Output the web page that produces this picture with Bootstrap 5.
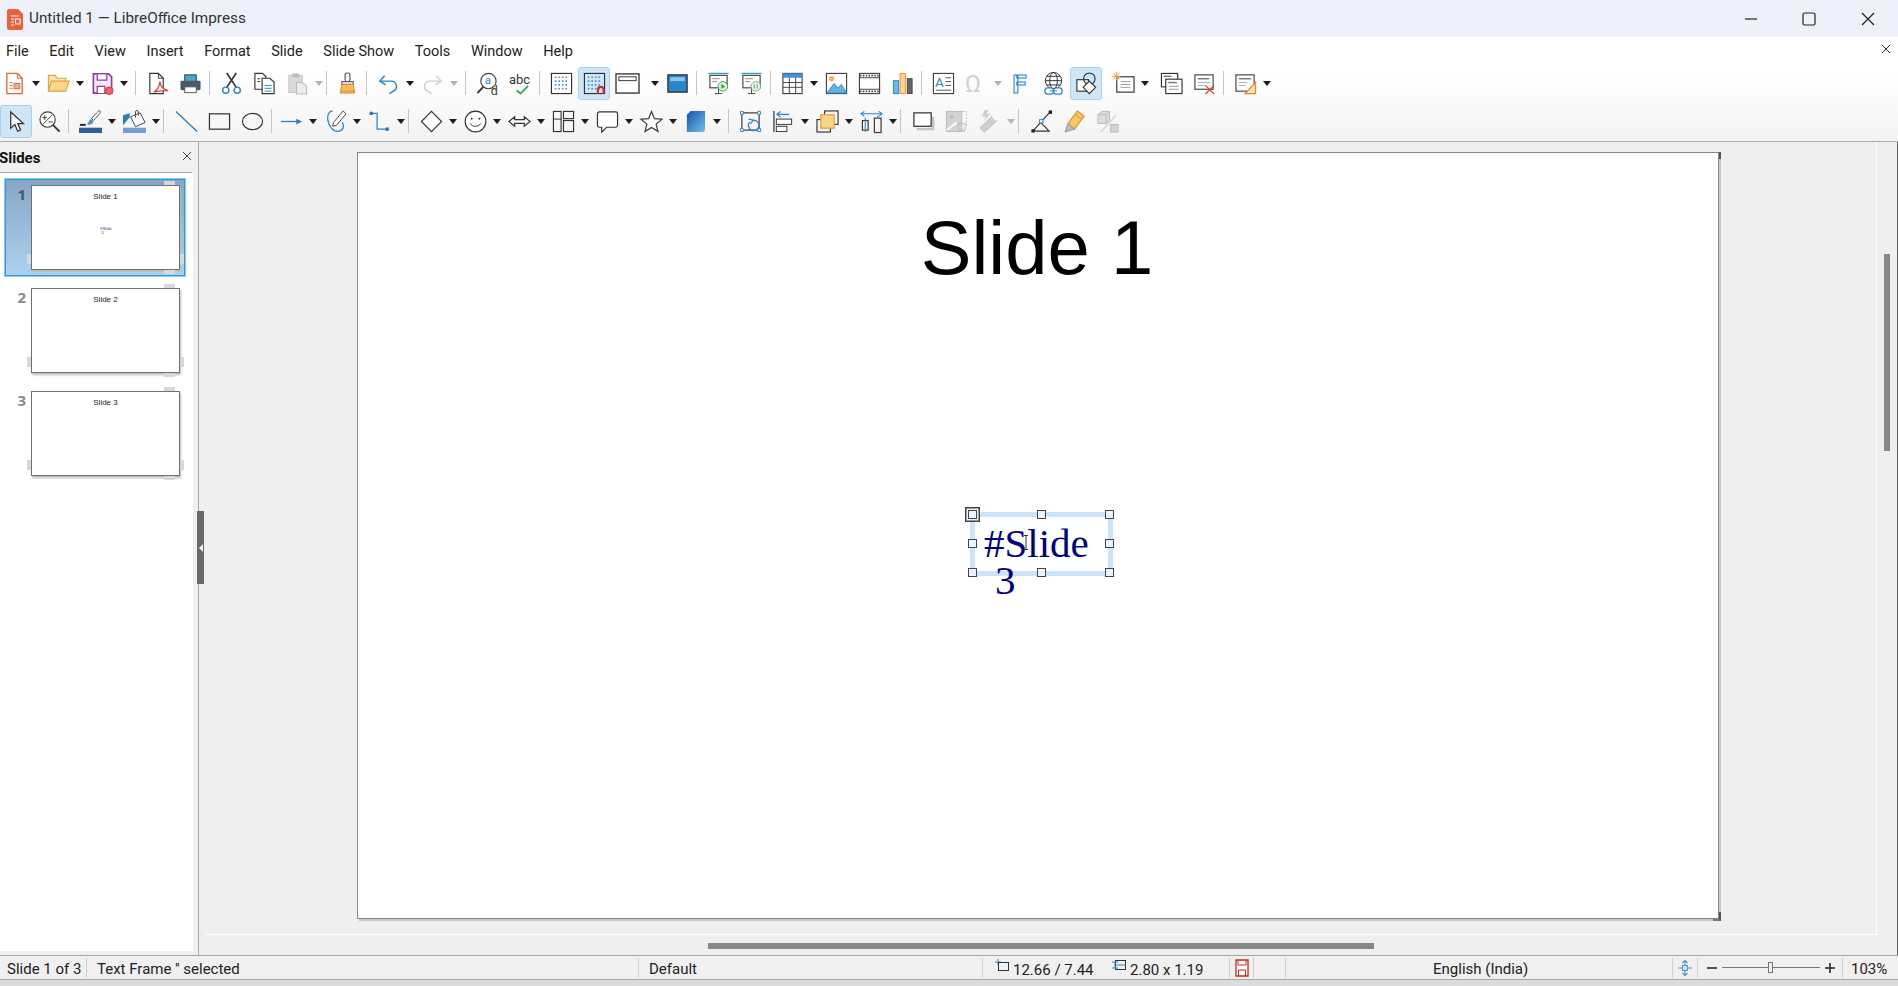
<!DOCTYPE html>
<html lang="en">
<head>
<meta charset="UTF-8">
<title>Untitled 1 — LibreOffice Impress</title>
<link href="https://cdn.jsdelivr.net/npm/bootstrap@5.3.0/dist/css/bootstrap.min.css" rel="stylesheet">
<style>
html, body { height: 986px; overflow: hidden; }
body { width: 1898px; background: #fff; font-family: Roboto, "Liberation Sans", sans-serif; color: #222; }

/* title bar */
.win-title { height: 37px; background: #eef1f9; padding-left: 6px; font-size: 15.3px; color: #333; }
.win-title .app-logo { width: 18px; height: 22px; margin-right: 5px; }
.win-btns { margin-left: auto; }
.win-btns svg { width: 14px; height: 14px; }
.win-btn-min { margin-right: 44px; }
.win-btn-max { margin-right: 45px; }
.win-btn-close { margin-right: 23px; }

/* menu + toolbars */
.chrome { height: 105px; background: linear-gradient(#fff 0, #fff 35%, #f3f3f3 100%); border-bottom: 1px solid #ababab; flex: none; }
.menu-row { height: 28px; padding: 2px 0 0 6px; gap: 20.6px; font-size: 14.5px; position: relative; }
.menu-row .nav-link { padding: 0; color: #222; }
.doc-close { position: absolute; right: 8px; top: 8px; width: 8px; height: 8px; }
.tbar { display: flex; align-items: center; }
.tbar-std { height: 36px; }
.tbar-draw { height: 40px; padding-left: 2px; }
.tb-tool { width: 28px; height: 30px; margin-right: 5px; padding: 0; border: 0; border-radius: 3px; display: flex; align-items: center; justify-content: center; background: transparent; }
.tb-tool svg { width: 23px; height: 23px; flex: none; overflow: visible; }
.tb-tool.with-drop { margin-right: 0; }
.tb-tool.wide-drop { padding-right: 6px; width: 34px; }
.tb-tool.is-on { width: 32px; height: 33px; margin: 0 3px 0 -2px; background: #cfe6f8; border: 1px solid #aad0ea; }
.tb-drop { width: 16px; display: flex; justify-content: center; flex: none; }
.tb-drop::after { content: ""; border-style: solid; border-width: 5px 4.5px 0; border-color: #1c1c1c transparent transparent; }
.tb-drop.off::after { border-top-color: #b5b5b5; }
.tb-sep { width: 1px; height: 24px; background: #c6c6c6; margin-right: 7px; flex: none; }
.tb-drop + .tb-sep { margin-left: 3px; margin-right: 7px; }
.tb-drop + .tb-sep.tight { margin-left: -1px; margin-right: 6px; }
.tbar-draw .tb-drop + .tb-sep.tight { margin-right: 8px; }
.tb-sep.narrow { margin-right: 5px; }
.tb-label { font-family: Roboto, sans-serif; }

/* main */
.work-area { height: 813px; flex: none; background: #efefef; }
.side-panel { width: 199px; flex: none; background: #f0f0f0; border-right: 1px solid #a8a8a8; position: relative; padding-bottom: 4px; }
.side-head { width: 192px; height: 31px; flex: none; border-bottom: 1px solid #a9a9a9; font-size: 15px; font-weight: 700; color: #111; line-height: 32px; }
.side-head .side-x { width: 10px; height: 10px; margin: 9px 0 0 auto; }
.side-head span { margin-left: -1px; }
.slide-list { width: 193px; background: #fff; padding: 6px 0 0 5px; flex-grow: 1; }
.slide-item { width: 180px; height: 97px; margin-bottom: 6px; padding-top: 6px; display: flex; }
.slide-item.is-current { background: linear-gradient(#86a6c4, #acd2f0); border: 1px solid #2d9ae0; box-shadow: 0 0 0 1px #8cc8f0; padding-top: 5px; margin-left: 0; }
.slide-item.is-current .slide-no { width: 20px; }
.slide-no { width: 21px; text-align: right; font-size: 15px; font-weight: 700; color: #8a8a8a; line-height: 19px; font-family: "Open Sans", sans-serif; }
.is-current .slide-no { color: #44586c; }
.slide-thumb { width: 149px; height: 85px; margin-left: 5px; background: #fff; border: 1px solid #707070; box-shadow: 1px 2px 2px #bbb; position: relative; font: 8px/1 "Liberation Sans", sans-serif; color: #222; text-align: center; padding-top: 7px; }
.slide-thumb::before { content: ""; position: absolute; left: 132px; top: -5px; width: 11px; height: 4px; background: #d8d8d8; box-shadow: 0 89px 0 #d8d8d8; }
.slide-thumb::after { content: ""; position: absolute; left: -5px; top: 68px; width: 4px; height: 10px; background: #d8d8d8; box-shadow: 153px 0 0 #d8d8d8; }
.thumb-mini { position: absolute; left: 68px; top: 41px; font: 4.8px/3.6px "Liberation Serif", serif; color: #1a1a9a; text-align: left; }
.side-grip { position: absolute; left: 197px; top: 369px; width: 7px; height: 73px; background: #696969; display: flex; align-items: center; justify-content: center; }
.side-grip::after { content: ""; border-style: solid; border-width: 4px 4px 4px 0; border-color: transparent #eee transparent transparent; }

.editor { flex-grow: 1; min-width: 0; }
.canvas-wrap { width: 1671px; height: 793px; padding: 10px 0 0 151px; border-right: 1px solid #fff; border-bottom: 1px solid #fff; flex: none; margin-left: 7px; }
.slide-page { width: 1362px; height: 767px; background: #fff; border: 1px solid #888; box-shadow: 2px 2px 0 #c9c9c9; position: relative; }
.slide-page::before { content: ""; position: absolute; right: -3px; top: -1px; width: 2px; height: 7px; background: #555; }
.slide-page::after { content: ""; position: absolute; right: -3px; bottom: -3px; width: 8px; height: 9px; border-right: 2px solid #555; border-bottom: 2px solid #777; }
.slide-heading { position: absolute; left: -2px; right: 0; top: 57px; text-align: center; font: 76px/1 "Liberation Sans", sans-serif; color: #000; }
.text-frame { position: absolute; left: 612px; top: 359px; width: 143px; height: 64px; border: 5px solid #cbe3fb; }
.frame-text { position: absolute; left: 9px; top: 8px; font: 41px/37px "Liberation Serif", serif; color: #000080; white-space: nowrap; }
.frame-text div + div { padding-left: 11px; }
.sel-dot { position: absolute; width: 9px; height: 9px; background: #eef4fb; border: 1.5px solid #444; }
.dot-l { left: -7px; } .dot-c { left: 62px; } .dot-r { left: 130px; }
.dot-t { top: -7px; } .dot-m { top: 22px; } .dot-b { top: 51px; }
.dot-first { box-shadow: 0 0 0 1.5px #eef4fb, 0 0 0 3px #444; }
.i-beam { position: absolute; left: 48px; top: 18px; width: 6px; height: 15px; }
.v-track { flex-grow: 1; padding: 112px 0 0 7px; border-right: 1px solid #5f5f5f; }
.v-thumb { width: 6px; height: 197px; background: #888; }
.h-track { height: 20px; padding: 8px 0 0 509px; flex: none; border-right: 1px solid #5f5f5f; }
.h-thumb { width: 666px; height: 6px; background: #888; }

/* status bar */
.status-bar { height: 25px; flex: none; background: #f0f0f0; border-top: 1px solid #a6a6a6; border-bottom: 1px solid #a6a6a6; font-size: 15px; color: #222; white-space: nowrap; }
.status-cell { height: 20px; border-left: 1px solid #cfcfcf; display: flex; align-items: center; flex: none; padding-top: 4px; }
.status-cell:first-child { border-left: 0; }
.cell-page { width: 86px; padding-left: 7px; }
.cell-sel { width: 552px; padding-left: 10px; }
.cell-style { width: 344px; padding-left: 10px; }
.cell-pos { width: 247px; padding-left: 12px; padding-top: 0; }
.cell-save { width: 24px; justify-content: center; padding-top: 0; }
.cell-mod { width: 32px; }
.cell-lang { width: 387px; padding-left: 147px; }
.cell-fit { width: 25px; justify-content: center; padding-top: 0; }
.cell-zoom { width: 145px; padding-left: 9px; padding-top: 0; }
.cell-pct { width: 56px; padding-left: 8px; }
.status-ico { width: 14px; height: 14px; flex: none; margin-right: 4px; margin-top: -4px; }
.pos-val { padding-top: 5px; width: 105px; }
.zoom-track { width: 98px; height: 1px; background: #777; margin: 0 5px; position: relative; }
.zoom-knob { position: absolute; left: 46px; top: -5px; width: 5px; height: 11px; background: #eee; border: 1px solid #777; }
.win-foot { height: 6px; flex: none; background: #dcdcdc; }
</style>
</head>
<body class="d-flex flex-column">

<svg width="0" height="0" class="position-absolute">
  <defs>
    <linearGradient id="cube-fill" x1="0" y1="0" x2="1" y2="1"><stop offset="0" stop-color="#0b57a8"/><stop offset="1" stop-color="#7dbcec"/></linearGradient>
    <g id="ic-page-lines" fill="none" stroke="#999"><path d="M9 10h10M9 13h10M9 16h10"/></g>
    <g id="ic-grid-dots" fill="none" stroke="#4a95c9" stroke-width="1.700" stroke-dasharray="1.700 2"><path d="M5 5.500h14M5 9.500h14M5 13.500h14M5 17.500h14"/></g>
  </defs>
</svg>

<!-- Title bar -->
<div class="win-title d-flex align-items-center flex-none">
  <svg class="app-logo" viewBox="0 0 18 22"><path d="M1 3a2 2 0 0 1 2-2h9l5 5v14a2 2 0 0 1-2 2H3a2 2 0 0 1-2-2z" fill="#e8613a"/><path d="M5 8h8M5 11h3M5 14h3M5 17h3" stroke="#fff" fill="none"/><rect x="9.500" y="11" width="4.500" height="5" fill="none" stroke="#fff"/></svg>
  <span>Untitled 1 — LibreOffice Impress</span>
  <div class="win-btns d-flex align-items-center">
    <svg class="win-btn-min" viewBox="0 0 14 14"><path d="M1 7h12" stroke="#222" stroke-width="1.200"/></svg>
    <svg class="win-btn-max" viewBox="0 0 14 14"><rect x="1" y="1" width="12" height="12" rx="1.500" fill="none" stroke="#222" stroke-width="1.200"/></svg>
    <svg class="win-btn-close" viewBox="0 0 14 14"><path d="M1 1l12 12M13 1L1 13" stroke="#222" stroke-width="1.200"/></svg>
  </div>
</div>

<div class="chrome">
  <!-- Menu -->
  <nav class="nav menu-row align-items-center">
    <a class="nav-link" href="#">File</a>
    <a class="nav-link" href="#">Edit</a>
    <a class="nav-link" href="#">View</a>
    <a class="nav-link" href="#">Insert</a>
    <a class="nav-link" href="#">Format</a>
    <a class="nav-link" href="#">Slide</a>
    <a class="nav-link" href="#">Slide Show</a>
    <a class="nav-link" href="#">Tools</a>
    <a class="nav-link" href="#">Window</a>
    <a class="nav-link" href="#">Help</a>
    <svg class="doc-close" viewBox="0 0 8 8"><path d="M0 0l8 8M8 0L0 8" stroke="#333"/></svg>
  </nav>

  <!-- Standard toolbar -->
  <div class="tbar tbar-std">
    <button class="tb-tool with-drop"><svg viewBox="0 0 24 24"><path d="M4 1.500h11l5 5v16H4z" fill="#fff" stroke="#e2673a" stroke-width="1.400"/><path d="M15 1.500v5h5M7 11h3M7 14h3M7 17h3" fill="none" stroke="#e2673a"/><rect x="11.500" y="12" width="6" height="5.500" fill="#f4ae84" stroke="#e2673a"/></svg></button><span class="tb-drop"></span>
    <button class="tb-tool with-drop"><svg viewBox="0 0 24 24"><path d="M1.500 20V3.500h7l2 3h9v3" fill="#fde4ad" stroke="#dfa544" stroke-width="1.200"/><path d="M1.500 20l3-10.500h18.500l-3.500 10.500z" fill="#fdd68a" stroke="#dfa544" stroke-width="1.200"/></svg></button><span class="tb-drop"></span>
    <button class="tb-tool with-drop"><svg viewBox="0 0 24 24"><path d="M2.500 2h16l3 3v17h-19z" fill="#f6e9f8" stroke="#8d3c9c" stroke-width="1.700"/><path d="M6.500 2.500v6h10v-6M6.500 22v-7h8v7" fill="#fff" stroke="#8d3c9c" stroke-width="1.300"/><circle cx="19" cy="19.500" r="4" fill="#f0615f" stroke="#d33a3a"/></svg></button><span class="tb-drop"></span>
    <span class="tb-sep"></span>
    <button class="tb-tool"><svg viewBox="0 0 24 24"><path d="M4 1.500h9l5 5v16H4z" fill="#fff" stroke="#333" stroke-width="1.200"/><path d="M13 1.500v5h5" fill="none" stroke="#333"/><path d="M8 21c4-2 6-6 6.500-11 .5 5 3 8 8.500 9.500-6-.5-10 0-15 1.500z" fill="#fff" stroke="#e0403a" stroke-width="1.300"/></svg></button>
    <button class="tb-tool"><svg viewBox="0 0 24 24"><rect x="6" y="3" width="12" height="7" fill="#4ba6d6" stroke="#333"/><rect x="1.500" y="9" width="21" height="10" rx="1.500" fill="#4a5a66"/><rect x="6" y="15.500" width="12" height="6" fill="#fff" stroke="#4a5a66"/></svg></button>
    <span class="tb-sep"></span>
    <button class="tb-tool"><svg viewBox="0 0 24 24"><path d="M7 1l10 15M17 1L7 16" fill="none" stroke="#333" stroke-width="1.700"/><circle cx="6" cy="19" r="3.200" fill="none" stroke="#2a86c8" stroke-width="1.500"/><circle cx="18" cy="19" r="3.200" fill="none" stroke="#2a86c8" stroke-width="1.500"/></svg></button>
    <button class="tb-tool"><svg viewBox="0 0 24 24"><path d="M2 1.500h8l3.500 3.500v13H2z" fill="#fff" stroke="#333" stroke-width="1.200"/><path d="M9.500 6.500h8l4.500 4v12H9.500z" fill="#fff" stroke="#333" stroke-width="1.200"/><path d="M12 14h7.500M12 17h7.500M12 20h7.500" stroke="#2a86c8" fill="none"/><path d="M4.500 7h3M4.500 10h3" stroke="#333" fill="none"/></svg></button>
    <button class="tb-tool with-drop"><svg viewBox="0 0 24 24"><rect x="3" y="3.500" width="14" height="18" fill="#dadada" stroke="#c2c2c2"/><rect x="6.500" y="1.500" width="7" height="4" fill="#bdbdbd"/><path d="M11 11h6l4.500 4v8H11z" fill="#ededed" stroke="#bdbdbd" stroke-width="1.200"/></svg></button><span class="tb-drop off"></span>
    <span class="tb-sep tight"></span>
    <button class="tb-tool"><svg viewBox="0 0 24 24"><rect x="9.500" y="1" width="5" height="9" rx="2" fill="#fff" stroke="#555" stroke-width="1.200"/><rect x="6" y="10" width="12" height="3" fill="#ddd" stroke="#555"/><path d="M6 13h12l1.500 9h-15z" fill="#f7bb63" stroke="#dc8d24"/><path d="M4.500 20h15" stroke="#dc8d24" fill="none"/></svg></button>
    <span class="tb-sep"></span>
    <button class="tb-tool with-drop"><svg viewBox="0 0 24 24"><path d="M3 9.500h12a5.500 5.500 0 0 1 2.500 10.300L13 22.500M8 4L3 9.500l6 4" fill="none" stroke="#2a86c8" stroke-width="1.500"/></svg></button><span class="tb-drop"></span>
    <button class="tb-tool with-drop"><svg viewBox="0 0 24 24"><path d="M21 9.500H9a5.500 5.500 0 0 0-2.500 10.300L11 22.500M16 4l5 5.500-6 4" fill="none" stroke="#cfcfcf" stroke-width="1.500"/></svg></button><span class="tb-drop off"></span>
    <span class="tb-sep"></span>
    <button class="tb-tool"><svg viewBox="0 0 24 24"><circle cx="13" cy="9.500" r="8" fill="#fff" stroke="#444" stroke-width="1.200"/><path d="M7.500 15.500L1.500 22" stroke="#333" stroke-width="2" fill="none"/><text x="9.200" y="13" font-size="12" fill="#2a86c8" class="tb-label">a</text><text x="15.500" y="24" font-size="13" fill="#333" class="tb-label">d</text></svg></button>
    <button class="tb-tool"><svg viewBox="0 0 24 24"><text x="0" y="12" font-size="13.500" fill="#333" class="tb-label">abc</text><path d="M8 19l4 3.500 8-8" fill="none" stroke="#3aa655" stroke-width="1.900"/></svg></button>
    <span class="tb-sep"></span>
    <button class="tb-tool"><svg viewBox="0 0 24 24"><rect x="1.500" y="1.500" width="21" height="21" fill="#fff" stroke="#333" stroke-width="1.200"/><use href="#ic-grid-dots"/></svg></button>
    <button class="tb-tool is-on"><svg viewBox="0 0 24 24"><rect x="1.500" y="1.500" width="21" height="21" fill="none" stroke="#333" stroke-width="1.200"/><use href="#ic-grid-dots"/><path d="M15.500 23v-4.500a3 3 0 0 1 6 0V23" fill="none" stroke="#cf2e2a" stroke-width="2.200"/></svg></button>
    <button class="tb-tool with-drop wide-drop"><svg viewBox="0 0 24 24"><rect x="0" y="2" width="24" height="20" fill="#fff" stroke="#333" stroke-width="1.400"/><rect x="3" y="5" width="18" height="4" fill="none" stroke="#333"/></svg></button><span class="tb-drop"></span>
    <button class="tb-tool"><svg viewBox="0 0 24 24"><rect x="2" y="3" width="20" height="18" fill="#2b88c8" stroke="#333" stroke-width="1.400"/><rect x="4.500" y="5.500" width="15" height="4" fill="#8ac6ee"/></svg></button>
    <span class="tb-sep"></span>
    <button class="tb-tool"><svg viewBox="0 0 24 24"><path d="M1.500 1.500h21" stroke="#2aa5c8" stroke-width="1.400" fill="none"/><rect x="3" y="3.500" width="18" height="13" fill="#fff" stroke="#444" stroke-width="1.200"/><path d="M12 16.500v6M8 22.500h8" stroke="#444" fill="none"/><path d="M5.500 7h8M5.500 10h5" stroke="#888" fill="none"/><circle cx="16.500" cy="15" r="5" fill="#d9f3dc" stroke="#3aa655"/><path d="M15 12.300l4 2.700-4 2.700z" fill="#3aa655"/></svg></button>
    <button class="tb-tool"><svg viewBox="0 0 24 24"><path d="M1.500 1.500h21" stroke="#2aa5c8" stroke-width="1.400" fill="none"/><rect x="3" y="3.500" width="18" height="13" fill="#fff" stroke="#444" stroke-width="1.200"/><path d="M12 16.500v6M8 22.500h8" stroke="#444" fill="none"/><path d="M5.500 7h8M5.500 10h5" stroke="#888" fill="none"/><circle cx="16.500" cy="15" r="5" fill="#e6f3e8" stroke="#7dae8a"/><path d="M15 12.800v4.400M18 12.800v4.400" stroke="#7dae8a" stroke-width="1.300" fill="none"/></svg></button>
    <span class="tb-sep"></span>
    <button class="tb-tool with-drop"><svg viewBox="0 0 24 24"><rect x="2" y="1.500" width="20" height="21" fill="#fff" stroke="#444" stroke-width="1.200"/><rect x="2" y="1.500" width="20" height="4.500" fill="#3f93d4"/><path d="M2 11h20M2 16h20M8.700 6v16.500M15.300 6v16.500" stroke="#444" fill="none"/></svg></button><span class="tb-drop"></span>
    <button class="tb-tool"><svg viewBox="0 0 24 24"><rect x="1.500" y="1.500" width="21" height="21" fill="#fff" stroke="#444" stroke-width="1.200"/><circle cx="7" cy="7" r="2.200" fill="#f4c070" stroke="#e49a33"/><path d="M2 22l7.500-10 4 5 3.500-4 5.500 9z" fill="#6bb2e4" stroke="#2a86c8"/></svg></button>
    <button class="tb-tool"><svg viewBox="0 0 24 24"><rect x="1.500" y="1.500" width="21" height="21" fill="#fff" stroke="#444" stroke-width="1.200"/><path d="M1.500 6h21M1.500 18h21" stroke="#444" fill="none"/><path d="M2 3.800h20M2 20.200h20" stroke="#444" stroke-width="2" stroke-dasharray="1.600 1.400" fill="none"/></svg></button>
    <button class="tb-tool"><svg viewBox="0 0 24 24"><rect x="2.500" y="9" width="5.500" height="13.500" fill="#6cb8ef" stroke="#2a86c8"/><rect x="9.500" y="1.500" width="5.500" height="21" fill="#fdd58a" stroke="#e49a33"/><rect x="17" y="7" width="5" height="15.500" fill="#666" stroke="#444"/></svg></button>
    <span class="tb-sep"></span>
    <button class="tb-tool"><svg viewBox="0 0 24 24"><rect x="1.500" y="1.500" width="21" height="21" fill="#fff" stroke="#444" stroke-width="1.200"/><text x="3" y="16" font-size="14" fill="#2a86c8" class="tb-label">A</text><path d="M14 6h6M14 10h6M14 14h6M4 19h16" stroke="#555" fill="none"/></svg></button>
    <button class="tb-tool with-drop"><svg viewBox="0 0 24 24"><text x="0" y="21" font-size="25" fill="#d2d2d2" class="tb-label">Ω</text></svg></button><span class="tb-drop off"></span>
    <button class="tb-tool"><svg viewBox="0 0 24 24"><text x="3.500" y="22" font-size="27" font-weight="700" fill="#fff" stroke="#1e88cf" stroke-width="1.100" class="tb-label">F</text></svg></button>
    <button class="tb-tool"><svg viewBox="0 0 24 24"><circle cx="12" cy="9" r="8.500" fill="#fff" stroke="#333"/><ellipse cx="12" cy="9" rx="4" ry="8.500" fill="none" stroke="#333"/><path d="M3.500 9h17M5 4.500h14M5 13.500h14" stroke="#333" fill="none"/><rect x="3" y="16.500" width="9" height="6.500" rx="3" fill="#fff" stroke="#2a86c8" stroke-width="1.300"/><rect x="12" y="16.500" width="9" height="6.500" rx="3" fill="#fff" stroke="#2a86c8" stroke-width="1.300"/><path d="M8 19.700h8" stroke="#2a86c8" fill="none"/></svg></button>
    <button class="tb-tool is-on"><svg viewBox="0 0 24 24"><rect x="2" y="8" width="12" height="12" fill="#fff" stroke="#333" stroke-width="1.200"/><circle cx="15" cy="7" r="6" fill="none" stroke="#333" stroke-width="1.200"/><path d="M15 9.500l6.500 6.500-6.500 6.500L8.500 16z" fill="#fff" stroke="#333" stroke-width="1.200"/></svg></button>
    <button class="tb-tool with-drop ms-1"><svg viewBox="0 0 24 24"><rect x="5" y="5" width="18" height="16" fill="#fff" stroke="#333" stroke-width="1.200"/><use href="#ic-page-lines"/><path d="M4.500 0v9M0 4.500h9M1.300 1.300l6.400 6.400M7.700 1.300l-6.400 6.400" stroke="#e8a33d" fill="none"/></svg></button><span class="tb-drop"></span>
    <button class="tb-tool ms-1"><svg viewBox="0 0 24 24"><rect x="1.500" y="1.500" width="17" height="14" fill="#fff" stroke="#333" stroke-width="1.200"/><path d="M4 4.500h8" stroke="#777" stroke-width="1.500" fill="none"/><rect x="6" y="7.500" width="17" height="15" fill="#fff" stroke="#333" stroke-width="1.200"/><path d="M8.500 11h9" stroke="#777" stroke-width="1.500" fill="none"/><path d="M9.500 15h10M9.500 18h10" stroke="#999" fill="none"/></svg></button>
    <button class="tb-tool"><svg viewBox="0 0 24 24"><rect x="2" y="3" width="19" height="15" fill="#fff" stroke="#444" stroke-width="1.200"/><path d="M5 7h12" stroke="#777" stroke-width="1.500" fill="none"/><path d="M5 11h13M5 14h8" stroke="#aaa" fill="none"/><path d="M13 14l9 9M22 14l-9 9" stroke="#e0403a" stroke-width="1.300" fill="none"/></svg></button>
    <span class="tb-sep"></span>
    <button class="tb-tool with-drop"><svg viewBox="0 0 24 24"><rect x="2" y="3" width="19" height="17" fill="#fff" stroke="#444" stroke-width="1.200"/><path d="M5 7h13" stroke="#777" stroke-width="1.500" fill="none"/><path d="M5 11h9M5 14h7" stroke="#aaa" fill="none"/><path d="M22.500 11v11.500h-11z" fill="#fbe3c0" stroke="#dc8d24" stroke-width="1.300"/></svg></button><span class="tb-drop"></span>
  </div>

  <!-- Drawing toolbar -->
  <div class="tbar tbar-draw">
    <button class="tb-tool is-on"><svg viewBox="0 0 24 24"><path d="M6 2v17l4.300-3.800 3 7 3-1.400-3-6.600h6z" fill="#fff" stroke="#333" stroke-width="1.300"/></svg></button>
    <button class="tb-tool"><svg viewBox="0 0 24 24"><circle cx="10" cy="10" r="8" fill="#fff" stroke="#444" stroke-width="1.200"/><path d="M15.500 15.500L22.500 22.500" stroke="#333" stroke-width="2" fill="none"/><path d="M5 15L15 5M4.500 8h5M7 5.500v5M11 12.500h4.500" stroke="#444" fill="none"/></svg></button>
    <span class="tb-sep"></span>
    <button class="tb-tool with-drop"><svg viewBox="0 0 24 24"><rect x="0" y="18.500" width="24" height="5.500" fill="#2e5f9e"/><path d="M1 15.500h6" stroke="#222" stroke-width="2" fill="none"/><path d="M22 1c1 1 0 3-7 10l-2-2c6-7 8-9 9-8z" fill="#fff" stroke="#444"/><path d="M12.500 9.500l2.500 2.500c-1 3-4 4-6.500 3 1.500-1 1.500-4 4-5.500z" fill="#4b8fc9"/></svg></button><span class="tb-drop"></span>
    <button class="tb-tool with-drop"><svg viewBox="0 0 24 24"><rect x="0" y="18.500" width="24" height="5.500" fill="#729fcf"/><path d="M0 16V5.500L7 3.500v4" fill="#2a7dbb"/><path d="M8 7l10-4 5 10-10 4.500z" fill="#fff" stroke="#444"/><path d="M13 8V2a1.500 1.500 0 0 1 3 0v4" fill="none" stroke="#444"/></svg></button><span class="tb-drop"></span>
    <span class="tb-sep tight"></span>
    <button class="tb-tool"><svg viewBox="0 0 24 24"><path d="M1 1.500l22 21" stroke="#2a78b8" stroke-width="1.300" fill="none"/></svg></button>
    <button class="tb-tool"><svg viewBox="0 0 24 24"><rect x="1.500" y="4" width="21" height="16" fill="none" stroke="#333" stroke-width="1.300"/></svg></button>
    <button class="tb-tool"><svg viewBox="0 0 24 24"><ellipse cx="12" cy="12" rx="10.500" ry="8.500" fill="none" stroke="#333" stroke-width="1.200"/></svg></button>
    <span class="tb-sep narrow"></span>
    <button class="tb-tool with-drop"><svg viewBox="0 0 24 24"><path d="M1 12h17" stroke="#2a78b8" stroke-width="1.300" fill="none"/><path d="M17 9l6 3-6 3z" fill="#2a78b8"/></svg></button><span class="tb-drop"></span>
    <button class="tb-tool with-drop"><svg viewBox="0 0 24 24"><path d="M9 1C3 2 3 9 5 14s6 9 11 8 5-6 3-9" fill="none" stroke="#2a86c8" stroke-width="1.300"/><path d="M20 1l3 3-10 12-4 1 1-4z" fill="#fff" stroke="#444"/></svg></button><span class="tb-drop"></span>
    <button class="tb-tool with-drop"><svg viewBox="0 0 24 24"><path d="M3.500 3.500h6v16.500h11" fill="none" stroke="#2a86c8" stroke-width="1.300"/><circle cx="3.500" cy="3.500" r="2" fill="#2a78b8"/><circle cx="20" cy="20" r="2" fill="#2a78b8"/></svg></button><span class="tb-drop"></span>
    <span class="tb-sep tight"></span>
    <button class="tb-tool with-drop"><svg viewBox="0 0 24 24"><path d="M12 1.500L22.500 12 12 22.500 1.500 12z" fill="#fff" stroke="#333" stroke-width="1.200"/></svg></button><span class="tb-drop"></span>
    <button class="tb-tool with-drop"><svg viewBox="0 0 24 24"><circle cx="12" cy="12" r="10.800" fill="#fff" stroke="#333" stroke-width="1.200"/><circle cx="8" cy="9" r="1" fill="#333"/><circle cx="16" cy="9" r="1" fill="#333"/><path d="M6.500 14c2 4 9 4 11 0" fill="none" stroke="#333"/></svg></button><span class="tb-drop"></span>
    <button class="tb-tool with-drop"><svg viewBox="0 0 24 24"><path d="M1 12l6-5v3h10V7l6 5-6 5v-3H7v3z" fill="#fff" stroke="#333" stroke-width="1.200"/></svg></button><span class="tb-drop"></span>
    <button class="tb-tool with-drop"><svg viewBox="0 0 24 24"><rect x="1.500" y="1.500" width="8" height="21" fill="none" stroke="#333" stroke-width="1.200"/><rect x="12" y="1.500" width="10.500" height="7.500" fill="none" stroke="#333" stroke-width="1.200"/><rect x="12" y="11" width="10.500" height="11.500" fill="none" stroke="#333" stroke-width="1.200"/><path d="M1.500 9.500h8" stroke="#333" fill="none"/></svg></button><span class="tb-drop"></span>
    <button class="tb-tool with-drop"><svg viewBox="0 0 24 24"><path d="M3.500 2h17a2 2 0 0 1 2 2v12a2 2 0 0 1-2 2H11l-5 5v-5H3.500a2 2 0 0 1-2-2V4a2 2 0 0 1 2-2z" fill="#fff" stroke="#333" stroke-width="1.200"/></svg></button><span class="tb-drop"></span>
    <button class="tb-tool with-drop"><svg viewBox="0 0 24 24"><path d="M12 1.500l3 7.500 8 .6-6.200 5.100 2 7.800L12 18.200l-6.800 4.300 2-7.800L1 9.600 9 9z" fill="#fff" stroke="#333" stroke-width="1.200"/></svg></button><span class="tb-drop"></span>
    <button class="tb-tool with-drop"><svg viewBox="0 0 24 24"><path d="M7 1h15v19a3 3 0 0 1-3 3H3V5z" fill="url(#cube-fill)"/></svg></button><span class="tb-drop"></span>
    <span class="tb-sep"></span>
    <button class="tb-tool"><svg viewBox="0 0 24 24"><rect x="3" y="3" width="18" height="18" fill="none" stroke="#333" stroke-width="1.200"/><path d="M1.500 1.500h3v3h-3zM19.500 1.500h3v3h-3zM1.500 19.500h3v3h-3zM19.500 19.500h3v3h-3z" fill="#fff" stroke="#2a86c8"/><path d="M15 10.500a5.500 5.500 0 1 1-4 2M10 9.500l5 1-3 4" fill="none" stroke="#2a86c8" stroke-width="1.300"/></svg></button>
    <button class="tb-tool with-drop"><svg viewBox="0 0 24 24"><path d="M2 1v22" stroke="#444" stroke-width="1.400" fill="none"/><rect x="4.500" y="9.500" width="16" height="5.500" fill="#fff" stroke="#333"/><rect x="4.500" y="17" width="11" height="5.500" fill="#fff" stroke="#333"/><path d="M5 4.500h13M9 1.500L5 4.500l4 3" fill="none" stroke="#2a86c8" stroke-width="1.200"/></svg></button><span class="tb-drop"></span>
    <button class="tb-tool with-drop"><svg viewBox="0 0 24 24"><rect x="9" y="1" width="14" height="14" fill="none" stroke="#333" stroke-width="1.200"/><rect x="1" y="10" width="14" height="13" fill="none" stroke="#333" stroke-width="1.200"/><rect x="5" y="5" width="14" height="14" fill="#fbd586" stroke="#e49a33" stroke-width="1.200"/></svg></button><span class="tb-drop"></span>
    <button class="tb-tool with-drop"><svg viewBox="0 0 24 24"><rect x="2.500" y="11" width="6" height="10" fill="none" stroke="#333" stroke-width="1.200"/><rect x="15" y="8.500" width="7" height="15" fill="none" stroke="#333" stroke-width="1.200"/><path d="M5.500 8v15M18.500 6v3M1 4h22M4.500 1.500L1 4l3.500 2.500M19.500 1.500L23 4l-3.500 2.500" fill="none" stroke="#2a86c8" stroke-width="1.100"/></svg></button><span class="tb-drop"></span>
    <span class="tb-sep tight"></span>
    <button class="tb-tool"><svg viewBox="0 0 24 24"><path d="M5 20h17V7" fill="none" stroke="#c4c4c4" stroke-width="2.500"/><rect x="2" y="3" width="18" height="14" fill="#fff" stroke="#333" stroke-width="1.300"/></svg></button>
    <button class="tb-tool"><svg viewBox="0 0 24 24"><rect x="1.500" y="1.500" width="16" height="21" fill="#d2d2d2" stroke="#bdbdbd"/><circle cx="7" cy="7" r="2" fill="#bbb"/><path d="M2 21l10-8" stroke="#fff" stroke-width="2" fill="none"/><path d="M18 1.500h4.500v15M15 22.500h7" fill="none" stroke="#bdbdbd" stroke-dasharray="2 1.500"/><rect x="14" y="14" width="7" height="7" fill="none" stroke="#bdbdbd"/></svg></button>
    <button class="tb-tool with-drop"><svg viewBox="0 0 24 24"><path d="M2 19L15 6l5 5L7 23z" fill="#cfcfcf" stroke="#bdbdbd"/><path d="M7 0L4 7h4l-2 5 7-8H9l2-4z" fill="#cfcfcf"/><path d="M15 6l5 5" stroke="#fff" stroke-width="2" fill="none"/></svg></button><span class="tb-drop off"></span>
    <span class="tb-sep tight"></span>
    <button class="tb-tool"><svg viewBox="0 0 24 24"><path d="M3 22L21 2M11 13l9 9H3" fill="none" stroke="#333" stroke-width="1.200"/><rect x="1.500" y="20" width="3.500" height="3.500" fill="#222"/><rect x="19.500" y="0.500" width="3.500" height="3.500" fill="#222"/><rect x="10" y="10" width="3.500" height="3.500" fill="#fff" stroke="#2a86c8"/></svg></button>
    <button class="tb-tool"><svg viewBox="0 0 24 24"><path d="M15 1l7 5.500L12 20l-7-5.500z" fill="#f7c766" stroke="#dc9a30" stroke-width="1.300"/><path d="M5 14.500L2 23l10-3z" fill="#bbb" stroke="#999"/><path d="M12.500 4.500l7 5.500" stroke="#dc9a30" fill="none"/></svg></button>
    <button class="tb-tool"><svg viewBox="0 0 24 24"><path d="M2 5l4-3.500h8V11l-3.500 3H2z" fill="#ddd" stroke="#bbb"/><path d="M2 5h8.500v9M10.500 5L14 1.500" fill="none" stroke="#bbb"/><path d="M5 23L21 5" stroke="#ccc" stroke-width="1.200" fill="none"/><rect x="15" y="15" width="8" height="8" fill="#d4d4d4" stroke="#bbb"/></svg></button>
  </div>
</div>

<!-- Panel + editing view -->
<div class="work-area d-flex">
  <aside class="side-panel d-flex flex-column">
    <div class="side-head d-flex">
      <span>Slides</span>
      <svg class="side-x" viewBox="0 0 10 10"><path d="M1 1l8 8M9 1L1 9" stroke="#444"/></svg>
    </div>
    <div class="slide-list">
      <div class="slide-item is-current">
        <div class="slide-no">1</div>
        <div class="slide-thumb">Slide 1<div class="thumb-mini"><div>#Slide</div><div>&nbsp;3</div></div></div>
      </div>
      <div class="slide-item">
        <div class="slide-no">2</div>
        <div class="slide-thumb">Slide 2</div>
      </div>
      <div class="slide-item">
        <div class="slide-no">3</div>
        <div class="slide-thumb">Slide 3</div>
      </div>
    </div>
    <div class="side-grip"></div>
  </aside>

  <main class="editor d-flex flex-column">
    <div class="d-flex flex-grow-1">
      <div class="canvas-wrap">
        <div class="slide-page">
          <div class="slide-heading">Slide 1</div>
          <div class="text-frame">
            <div class="frame-text"><div>#Slide</div><div>3</div></div>
            <svg class="i-beam" viewBox="0 0 6 15"><path d="M1 .5h4M3 .5v14M1 14.500h4" stroke="#333" fill="none"/></svg>
            <span class="sel-dot dot-l dot-t dot-first"></span>
            <span class="sel-dot dot-c dot-t"></span>
            <span class="sel-dot dot-r dot-t"></span>
            <span class="sel-dot dot-l dot-m"></span>
            <span class="sel-dot dot-r dot-m"></span>
            <span class="sel-dot dot-l dot-b"></span>
            <span class="sel-dot dot-c dot-b"></span>
            <span class="sel-dot dot-r dot-b"></span>
          </div>
        </div>
      </div>
      <div class="v-track"><div class="v-thumb"></div></div>
    </div>
    <div class="h-track"><div class="h-thumb"></div></div>
  </main>
</div>

<!-- Status bar -->
<footer class="status-bar d-flex align-items-center">
  <div class="status-cell cell-page">Slide 1 of 3</div>
  <div class="status-cell cell-sel">Text Frame '' selected</div>
  <div class="status-cell cell-style">Default</div>
  <div class="status-cell cell-pos">
    <svg class="status-ico" viewBox="0 0 14 14"><path d="M3 0v6M0 3h6" stroke="#2a86c8" fill="none"/><rect x="3.500" y="3.500" width="10" height="8" fill="none" stroke="#333"/></svg>
    <span class="pos-val">12.66 / 7.44</span>
    <svg class="status-ico" viewBox="0 0 14 14"><rect x="3.500" y="1.500" width="10" height="9" fill="none" stroke="#333"/><path d="M0 3h6M0 9h6M3 3v6M3.500 6h10" stroke="#2a86c8" fill="none"/></svg>
    <span class="pos-val">2.80 x 1.19</span>
  </div>
  <div class="status-cell cell-save">
    <svg width="14" height="18" viewBox="0 0 14 18"><path d="M1 1h12v16H1z" fill="#fff" stroke="#c8281f" stroke-width="1.300"/><path d="M3 1v5h8V1M3.500 17v-6h7v6" fill="none" stroke="#c8281f"/></svg>
  </div>
  <div class="status-cell cell-mod"></div>
  <div class="status-cell cell-lang">English (India)</div>
  <div class="status-cell cell-fit">
    <svg width="14" height="16" viewBox="0 0 14 16"><path d="M7 0v16M0 8h14M4.500 3L7 .5 9.500 3M4.500 13L7 15.500 9.500 13" fill="none" stroke="#4a95c9" stroke-width="1.100"/><rect x="4.500" y="5.500" width="5" height="5" fill="#cfe3f2" stroke="#4a95c9"/></svg>
  </div>
  <div class="status-cell cell-zoom">
    <svg width="10" height="10" viewBox="0 0 10 10"><path d="M0 5h10" stroke="#222" stroke-width="1.500"/></svg>
    <div class="zoom-track"><span class="zoom-knob"></span></div>
    <svg width="10" height="10" viewBox="0 0 10 10"><path d="M0 5h10M5 0v10" stroke="#222" stroke-width="1.500"/></svg>
  </div>
  <div class="status-cell cell-pct">103%</div>
</footer>
<div class="win-foot"></div>

</body>
</html>
